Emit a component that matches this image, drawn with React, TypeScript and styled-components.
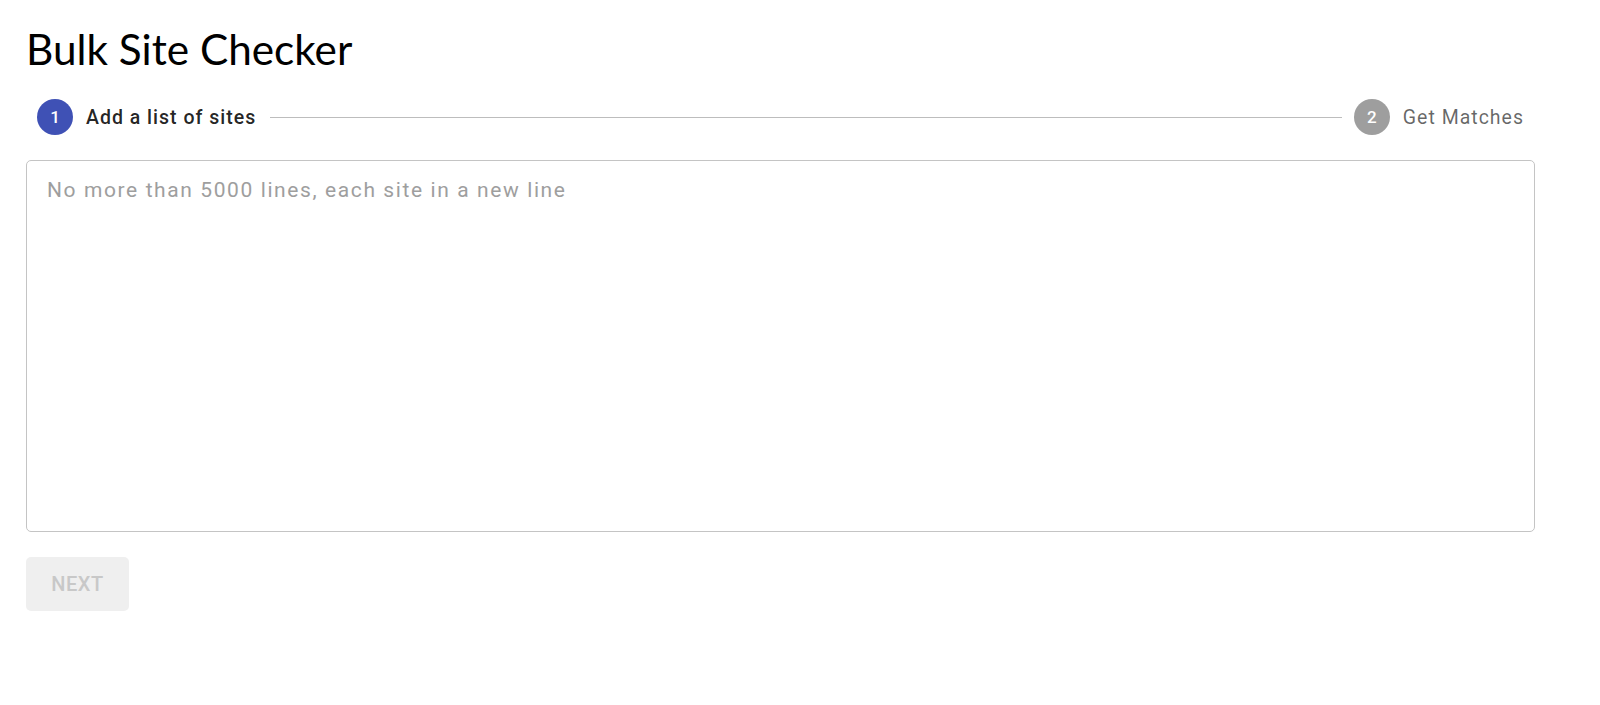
import React from 'react'
import styled, { createGlobalStyle } from 'styled-components'

const GlobalStyle = createGlobalStyle`
  html, body {
    margin: 0;
    padding: 0;
    background: #ffffff;
  }
  body {
    font-family: Roboto, 'Liberation Sans', Arial, sans-serif;
  }
`

const Page = styled.main`
  display: flex;
  flex-direction: column;
  width: 1509px;
  padding: 23px 0 0 26px;
`

const Title = styled.h1`
  margin: 0;
  font-family: Lato, 'Open Sans', sans-serif;
  font-weight: 400;
  font-size: 42.3px;
  line-height: 52px;
  color: #000000;
`

const Stepper = styled.div`
  display: flex;
  align-items: center;
  height: 36px;
  margin-top: 24px;
  padding: 0 11px;
`

const Step = styled.div`
  display: flex;
  align-items: center;
  gap: 13px;
  flex-shrink: 0;
`

const StepIcon = styled.span<{ $active?: boolean }>`
  display: flex;
  align-items: center;
  justify-content: center;
  width: 36px;
  height: 36px;
  border-radius: 50%;
  background: ${({ $active }) => ($active ? '#3f51b5' : '#9e9e9e')};
  color: #ffffff;
  font-size: 17px;
  font-weight: 500;
`

const StepLabel = styled.span<{ $active?: boolean }>`
  font-size: 19.5px;
  letter-spacing: 1px;
  font-weight: ${({ $active }) => ($active ? 500 : 400)};
  color: ${({ $active }) => ($active ? 'rgba(0, 0, 0, 0.87)' : 'rgba(0, 0, 0, 0.6)')};
`

const Connector = styled.span`
  flex: 1;
  height: 1px;
  margin: 0 12px 0 14px;
  background: #bdbdbd;
`

const SitesInput = styled.textarea`
  box-sizing: border-box;
  width: 100%;
  height: 372px;
  margin-top: 25px;
  padding: 17px 20px 16px;
  border: 1px solid #c4c4c4;
  border-radius: 5px;
  resize: none;
  outline: none;
  font-family: Roboto, 'Liberation Sans', Arial, sans-serif;
  font-size: 21px;
  letter-spacing: 1.6px;
  line-height: 24px;
  color: rgba(0, 0, 0, 0.87);

  &::placeholder {
    color: #9e9e9e;
    opacity: 1;
  }
`

const NextButton = styled.button`
  align-self: flex-start;
  width: 103px;
  height: 54px;
  margin-top: 25px;
  border: none;
  border-radius: 5px;
  background: #efefef;
  color: #c8c8c8;
  font-family: Roboto, 'Liberation Sans', Arial, sans-serif;
  font-size: 20px;
  font-weight: 500;
  letter-spacing: 0.5px;
  text-transform: uppercase;
  cursor: default;
`

const steps = ['Add a list of sites', 'Get Matches']

export default function App() {
  const activeStep = 0

  return (
    <>
      <GlobalStyle />
      <Page>
        <Title>Bulk Site Checker</Title>
        <Stepper>
          {steps.map((label, i) => (
            <React.Fragment key={label}>
              {i > 0 && <Connector />}
              <Step>
                <StepIcon $active={i === activeStep}>{i + 1}</StepIcon>
                <StepLabel $active={i === activeStep}>{label}</StepLabel>
              </Step>
            </React.Fragment>
          ))}
        </Stepper>
        <SitesInput placeholder="No more than 5000 lines, each site in a new line" />
        <NextButton type="button" disabled>
          Next
        </NextButton>
      </Page>
    </>
  )
}
